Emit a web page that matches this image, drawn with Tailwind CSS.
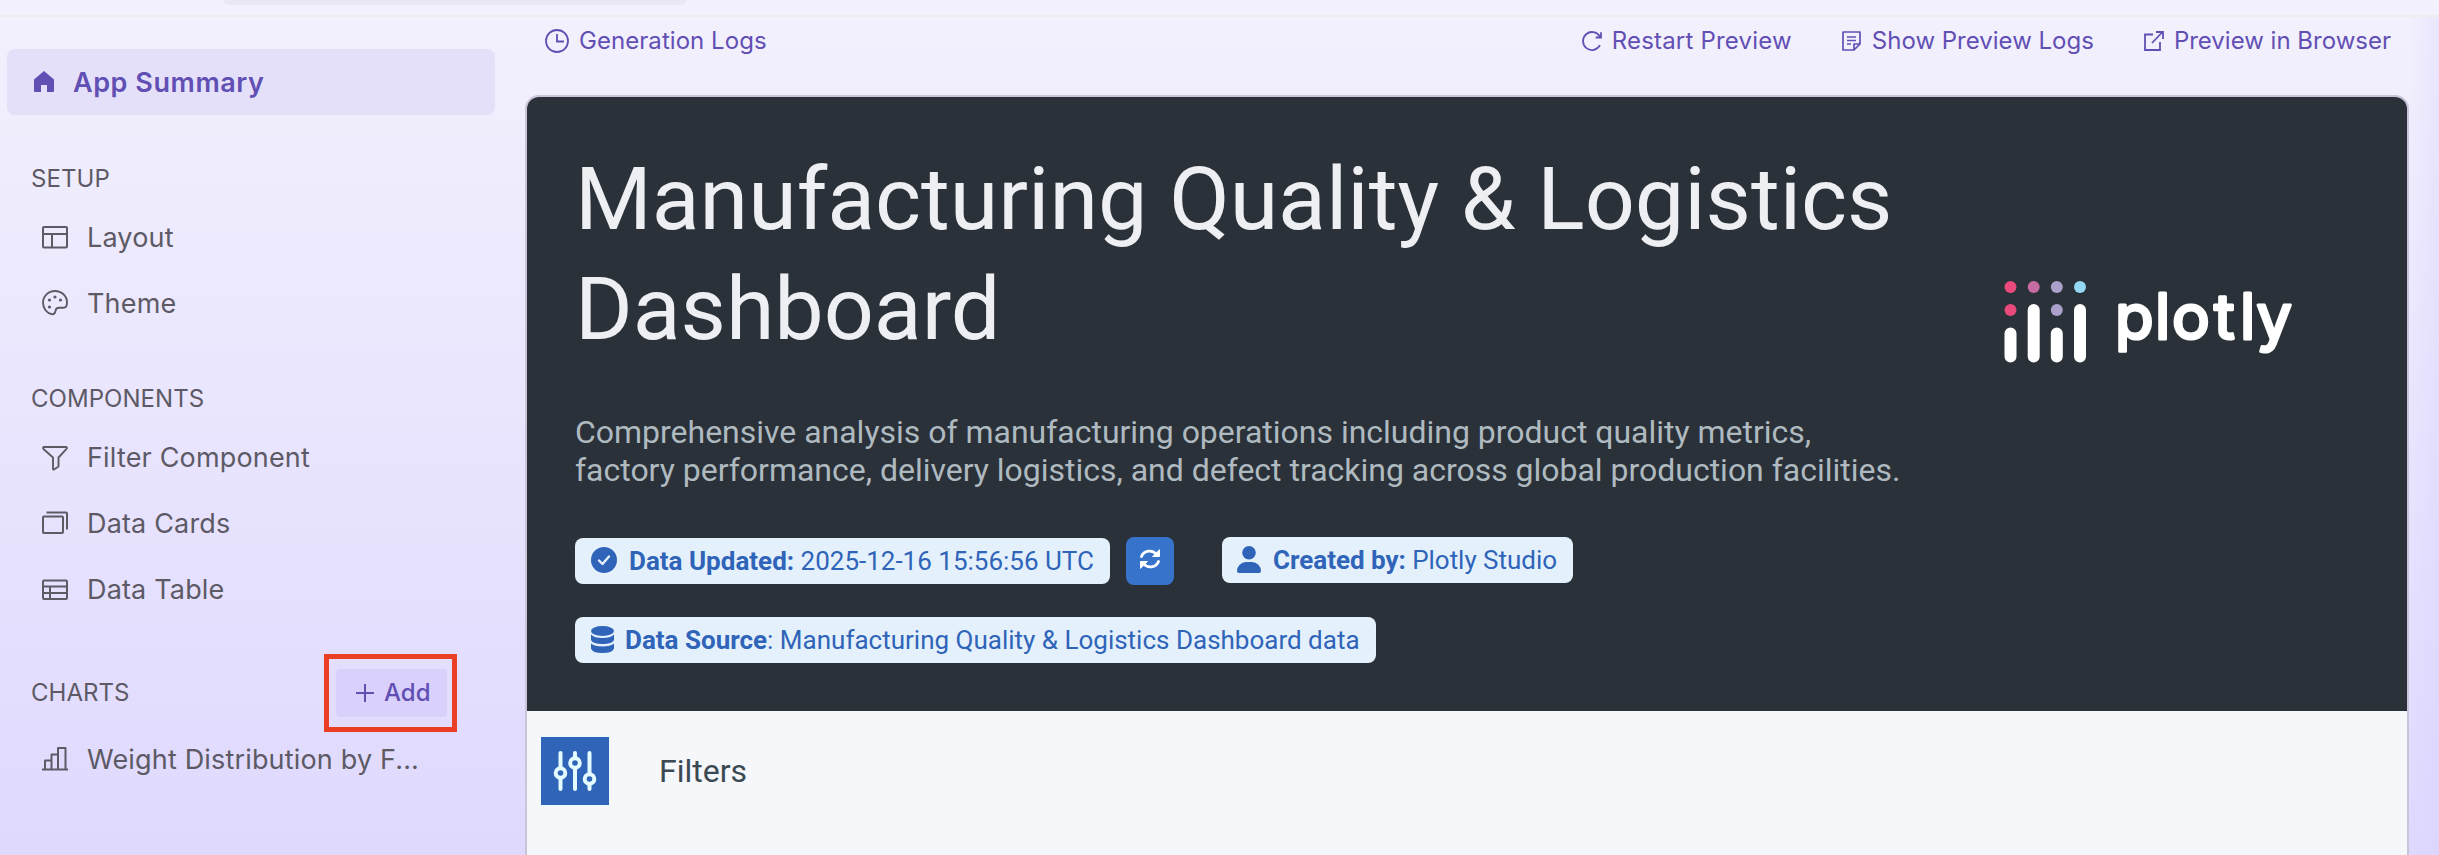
<!DOCTYPE html>
<html lang="en">
<head>
    <meta charset="UTF-8">
    <meta name="viewport" content="width=device-width, initial-scale=1.0">
    <title>Plotly Studio</title>
    <script src="https://cdn.jsdelivr.net/npm/@tailwindcss/browser@4"></script>
</head>
<body class="h-[855px] overflow-hidden bg-linear-to-b from-[#f3f1fd] to-[#dfd9fe] font-['Inter',sans-serif]">
    <!-- Top bar -->
    <header class="h-[17px] border-b-2 border-[#efeeee] pl-[223px]">
        <div class="h-[5px] w-[463px] rounded-b-md bg-[#eae8f5]"></div>
    </header>

    <div class="flex h-[838px]">
        <!-- Sidebar -->
        <aside class="w-[525px] shrink-0 pt-8 pl-[7px] text-[27px] tracking-[0.17px] text-[#5d5a66]">
            <a class="flex h-[66px] w-[488px] items-center rounded-lg bg-[#e5e0fa] pl-[27px] font-semibold tracking-[0.55px] text-[#624fb4]">
                <svg class="mr-[19px] h-[21px] w-5 -translate-y-px" viewBox="0 0 20 21" fill="currentColor"><path d="M10 0 20 8.500V20a1 1 0 0 1-1 1h-6v-7H7v7H1a1 1 0 0 1-1-1V8.500z"/></svg>
                <span class="translate-y-px">App Summary</span>
            </a>

            <h2 class="flex h-[90px] items-center pt-[38px] pl-6 text-[24px] tracking-[0.05px]">SETUP</h2>
            <a class="flex h-[66px] items-center gap-[19px] pl-[35px]">
                <svg class="size-[26px]" viewBox="0 0 26 26" fill="none" stroke="currentColor" stroke-width="2"><rect x="1" y="2" width="24" height="20.500" rx="1"/><path d="M1 9h24M10 9v13.500"/></svg>
                <span>Layout</span>
            </a>
            <a class="flex h-[66px] items-center gap-[19px] pl-[35px]">
                <svg class="size-[26px] -translate-y-px" viewBox="0 0 26 26" fill="none" stroke="currentColor" stroke-width="1.900"><path d="M25 12.500C25 6 19.600 1 13 1S1 6.200 1 12.800c0 5.700 3.800 10.300 8.600 11.300 2 .4 3.300-.8 3.700-2.600.4-2.400 1-3.700 3.700-3.700h4.500c2.300 0 3.500-2.300 3.500-5.300z"/><g fill="currentColor" stroke="none"><circle cx="13" cy="7" r="1.600"/><circle cx="7.500" cy="10" r="1.600"/><circle cx="18.500" cy="10" r="1.600"/><circle cx="7.500" cy="17" r="1.600"/></g></svg>
                <span>Theme</span>
            </a>

            <h2 class="flex h-[88px] items-center pt-9 pl-6 text-[24px] tracking-[0.05px]">COMPONENTS</h2>
            <a class="flex h-[66px] items-center gap-[19px] pl-[35px]">
                <svg class="size-[26px]" viewBox="0 0 26 26" fill="none" stroke="currentColor" stroke-width="1.900" stroke-linejoin="round"><path d="M1.500 2h23q.8 1-.2 2.200L16.500 12.500v9L12 24.500q-1 .2-1-.8V12.500L1.700 4.200Q.7 3 1.500 2z"/></svg>
                <span>Filter Component</span>
            </a>
            <a class="flex h-[66px] items-center gap-[19px] pl-[35px]">
                <svg class="size-[26px] -translate-y-px" viewBox="0 0 26 26" fill="none" stroke="currentColor" stroke-width="2"><rect x="1" y="6.500" width="20" height="16.500" rx="1"/><path d="M4.500 2.500H24a1 1 0 0 1 1 1V19.500"/></svg>
                <span>Data Cards</span>
            </a>
            <a class="flex h-[66px] items-center gap-[19px] pl-[35px]">
                <svg class="size-[26px]" viewBox="0 0 26 26" fill="none" stroke="currentColor" stroke-width="2"><rect x="1" y="3.500" width="24" height="18.500" rx="1"/><path d="M1 9.500h24M1 16h24M8 9.500V22"/></svg>
                <span>Data Table</span>
            </a>

            <div class="flex h-[104px] items-center pt-9 pl-6 text-[24px] tracking-[0.05px]">
                <h2 class="w-[293px]">CHARTS</h2>
                <div class="h-[78px] w-[133px] border-[5px] border-[#eb3f25] px-[7px] py-[10px]">
                    <button class="flex h-12 w-[111px] items-center rounded bg-[#d9d1fb] pl-5 font-medium tracking-normal text-[#624fb4]">
                        <svg class="mr-[10px] size-[18px]" viewBox="0 0 18 18" stroke="currentColor" stroke-width="2"><path d="M9 0v18M0 9h18"/></svg>
                        <span>Add</span>
                    </button>
                </div>
            </div>
            <a class="flex h-[66px] items-center gap-[19px] pl-[35px]">
                <svg class="size-[26px] -translate-y-px" viewBox="0 0 26 26" fill="none" stroke="currentColor" stroke-width="2" stroke-linejoin="round"><path d="M0 23.500h26M3 23.500V14.500h6.500M9.500 23.500V8.500h6.500M16 23.500V2h7.500v21.500"/></svg>
                <span>Weight Distribution by F...</span>
            </a>
        </aside>

        <!-- Preview -->
        <main class="w-[1884px] shrink-0">
            <div class="flex h-[78px] items-start pt-[9px] pl-5 text-[24px] leading-[30px] text-[#624fb4]">
                <a class="flex items-center">
                    <svg class="mr-[10px] size-6" viewBox="0 0 24 24" fill="none" stroke="currentColor" stroke-width="1.800"><circle cx="12" cy="12" r="11"/><path d="M12 5v7.500h7"/></svg>
                    <span class="tracking-[0.05px]">Generation Logs</span>
                </a>
                <div class="ml-auto flex pr-[18px]">
                    <a class="flex items-center">
                        <svg class="mr-[9px] size-[22px]" viewBox="0 0 22 22" fill="none" stroke="currentColor" stroke-width="1.800"><path d="M18.800 6.500A9 9 0 1 0 19 15.200M20 2.200v5.300h-5.300"/></svg>
                        <span class="tracking-[0.2px]">Restart Preview</span>
                    </a>
                    <a class="ml-[50px] flex items-center">
                        <svg class="mr-[11px] h-5 w-[19px]" viewBox="0 0 19 20" fill="none" stroke="currentColor" stroke-width="1.700" stroke-linejoin="round"><path d="M1 1h17v12l-6 6H1zM18 13h-6v6M5 6h9M5 9.500h9M5 13h4"/></svg>
                        <span>Show Preview Logs</span>
                    </a>
                    <a class="ml-[50px] flex items-center">
                        <svg class="mr-[10px] size-5" viewBox="0 0 20 20" fill="none" stroke="currentColor" stroke-width="1.800"><path d="M9 3.500H1V19h15V11M8 12 18.500 1M12 1h7v7"/></svg>
                        <span>Preview in Browser</span>
                    </a>
                </div>
            </div>

            <div class="h-[780px] overflow-hidden rounded-t-[14px] border-2 border-[#c9c4d9] bg-[#f5f7fb] font-['Roboto',sans-serif]">
                <section class="flex h-[614px] bg-[#2a3138] pt-[47px] pl-12">
                    <div class="w-[1429px] shrink-0">
                        <h1 class="h-[220px] text-[88px] leading-[110px] tracking-[-0.04px] text-[#eeeff2]">Manufacturing Quality &amp; Logistics<br>Dashboard</h1>
                        <p class="mt-[49px] h-[77px] text-[32px] leading-[38px] tracking-[-0.015px] text-[#afbac0]">Comprehensive analysis of manufacturing operations including product quality metrics,<br>factory performance, delivery logistics, and defect tracking across global production facilities.</p>
                        <!-- Info badges -->
                        <div class="mt-[47px] flex items-start text-[26px] leading-[46px] text-[#2f64b9]">
                            <div class="mt-px flex h-[46px] w-[535px] items-center rounded-lg bg-[#e4f1fc] pl-4">
                                <svg class="mr-3 size-[26px] -translate-y-px" viewBox="0 0 26 26"><circle cx="13" cy="13" r="13" fill="currentColor"/><path d="m8 13.500 3.500 3.500 6.500-7.500" fill="none" stroke="#e4f1fc" stroke-width="2.400" stroke-linecap="round" stroke-linejoin="round"/></svg>
                                <span><b>Data Updated:</b> 2025-12-16 15:56:56 UTC</span>
                            </div>
                            <button class="ml-4 flex size-12 justify-center rounded-lg bg-[#3873cb] pt-3">
                                <svg class="h-5 w-[22px]" viewBox="0 0 22 20" fill="none" stroke="#fff" stroke-width="2.800" stroke-linecap="round"><path d="M2.500 7.500A8.500 8 0 0 1 17.500 5.500M19.500 12.500A8.500 8 0 0 1 4.500 14.500"/><path d="M20.500 1v6.500h-6.500zM1.500 19v-6.500H8z" fill="#fff" stroke-width="1" stroke-linejoin="round"/></svg>
                            </button>
                            <div class="ml-12 flex h-[46px] w-[351px] items-center rounded-lg bg-[#e4f1fc] pl-[15px]">
                                <svg class="mr-3 h-[27px] w-6 -translate-y-px" viewBox="0 0 24 27" fill="currentColor"><circle cx="12" cy="6.800" r="6.800"/><path d="M0 25a9 9 0 0 1 9-9h6a9 9 0 0 1 9 9q0 2-2 2H2q-2 0-2-2z"/></svg>
                                <span class="tracking-[-0.03px]"><b>Created by:</b> Plotly Studio</span>
                            </div>
                        </div>
                        <div class="mt-8 flex h-[46px] w-[801px] items-center rounded-lg bg-[#e4f1fc] pl-4 text-[26px] text-[#2f64b9]">
                            <svg class="mr-[11px] h-[27px] w-[23px] -translate-y-px" viewBox="0 0 24 27" preserveAspectRatio="none" fill="currentColor"><ellipse cx="12" cy="5" rx="12" ry="5"/><path d="M0 8.500q3.500 3.500 12 3.500t12-3.500V14q-1.500 4-12 4T0 14zM0 17.500Q3.500 20.500 12 20.500t12-3v5q-1.500 4.500-12 4.500T0 22.500z"/></svg>
                            <span><b>Data Source</b>: Manufacturing Quality &amp; Logistics Dashboard data</span>
                        </div>
                    </div>
                    <!-- Logo -->
                    <svg class="mt-[131px] h-[100px] w-[300px]" viewBox="2004 275 300 100">
                        <circle cx="2010.500" cy="287" r="6" fill="#e94a7b"/><circle cx="2033.700" cy="287" r="6" fill="#c76ca0"/><circle cx="2056.800" cy="287" r="6" fill="#aba0cc"/><circle cx="2080" cy="287" r="6" fill="#96d7f5"/>
                        <circle cx="2010.500" cy="310" r="6" fill="#e94a7b"/><circle cx="2056.800" cy="310" r="6" fill="#aba0cc"/>
                        <g stroke="#fff" stroke-width="12" stroke-linecap="round"><path d="M2010.500 333.500v23M2033.700 310v46.500M2056.800 333.500v23M2080 310v46.500"/></g>
                        <text x="2115 2155 2172 2214 2240 2256.500" y="339" font-family="Inter" font-size="63" font-weight="400" fill="#fff" stroke="#fff" stroke-width="3.200" stroke-linejoin="round">plotly</text>
                    </svg>
                </section>
                <!-- Filters -->
                <section class="flex pt-[26px] pl-[14px]">
                    <div class="size-[68px] bg-[#2f64b8] outline-1 outline-[#e9fbff]">
                        <svg class="size-[68px]" viewBox="0 0 68 68" fill="none" stroke="#e4fbff" stroke-width="4" stroke-linecap="round"><path d="M19.500 16v15M19.500 41v11M34 16v5M34 31v21M48.500 16v21M48.500 47v5"/><circle cx="19.500" cy="36" r="4.800"/><circle cx="34" cy="26" r="4.800"/><circle cx="48.500" cy="42" r="4.800"/></svg>
                    </div>
                    <h3 class="ml-[50px] pt-[15px] text-[32px] leading-[38px] text-[#3b4a52]">Filters</h3>
                </section>
            </div>
        </main>
        <div class="grow bg-linear-to-r from-transparent to-[#d5ccfd]/30"></div>
    </div>
</body>
</html>
